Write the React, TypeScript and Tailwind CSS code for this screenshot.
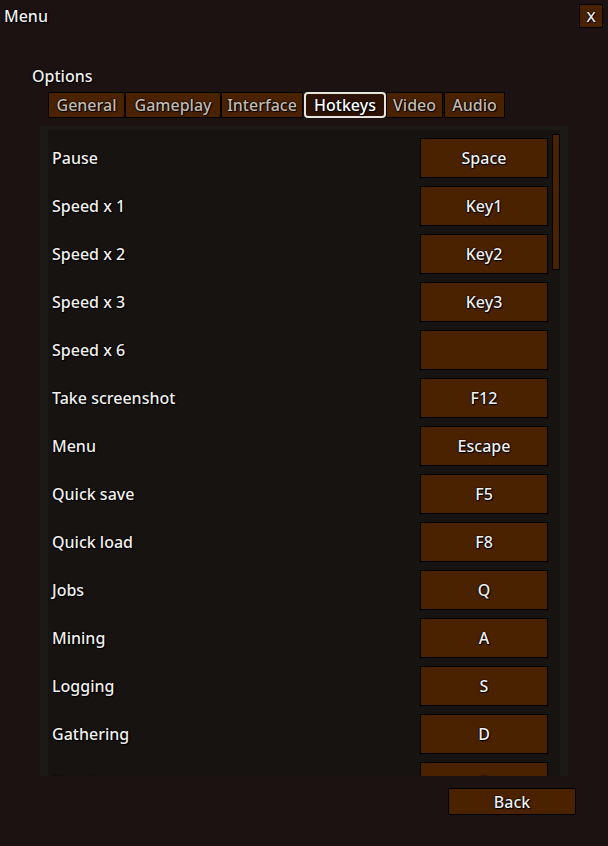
import React from "react";

const rows: [string, string][] = [
  ["Pause", "Space"],
  ["Speed x 1", "Key1"],
  ["Speed x 2", "Key2"],
  ["Speed x 3", "Key3"],
  ["Speed x 6", ""],
  ["Take screenshot", "F12"],
  ["Menu", "Escape"],
  ["Quick save", "F5"],
  ["Quick load", "F8"],
  ["Jobs", "Q"],
  ["Mining", "A"],
  ["Logging", "S"],
  ["Gathering", "D"],
  ["Hunting", "F"],
];

const tabs: { t: string; cls: string }[] = [
  { t: "General", cls: "w-[77px]" },
  { t: "Gameplay", cls: "w-[96px]" },
  { t: "Interface", cls: "w-[82px]" },
  { t: "Hotkeys", cls: "w-[82px] ml-[1px]" },
  { t: "Video", cls: "w-[57px]" },
  { t: "Audio", cls: "w-[61px] ml-[1px]" },
];

const shadow = "[text-shadow:0_0_2px_#000,0_0_1px_#000,1px_1px_1px_#000]";

export default function App() {
  return (
    <div
      className="w-[608px] h-[846px] bg-[#1c1212] flex flex-col text-[16px] font-medium text-[#f2f0ee] overflow-hidden"
      style={{ fontFamily: '"Noto Sans", "Open Sans", sans-serif' }}
    >
      <div className="h-8 flex items-center justify-between pl-1 pr-[5px]">
        <span className={`leading-6 ${shadow}`}>Menu</span>
        <div className={`w-6 h-6 bg-[#4a2200] border border-black flex items-center justify-center text-[15px] leading-none ${shadow}`}>
          X
        </div>
      </div>
      <div className="pl-8 mt-8">
        <div className={`leading-6 ${shadow}`}>Options</div>
      </div>
      <div className="flex ml-12 mt-1 h-[26px]">
        {tabs.map(({ t, cls }) =>
          t === "Hotkeys" ? (
            <div
              key={t}
              className={`${cls} h-[26px] flex items-center justify-center bg-[#2c1105] border-2 border-[#e8e4e0] rounded-[4px] text-white ${shadow}`}
            >
              {t}
            </div>
          ) : (
            <div
              key={t}
              className={`${cls} h-[26px] flex items-center justify-center bg-[#4a2200] border border-black text-[#c4bab0] ${shadow}`}
            >
              {t}
            </div>
          )
        )}
      </div>
      <div className="ml-10 mt-2 w-[528px] h-[650px] bg-[#1c1a17] px-2 pt-1 flex flex-col">
        <div className="flex-1 bg-[#161310] flex overflow-hidden">
          <div className="flex-1 pl-1 pt-2 flex flex-col gap-2">
            {rows.map(([label, key]) => (
              <div key={label} className="flex items-center justify-between h-10 shrink-0">
                <span className={shadow}>{label}</span>
                <div className={`w-32 h-10 bg-[#4a2200] border border-black flex items-center justify-center ${shadow}`}>
                  {key}
                </div>
              </div>
            ))}
          </div>
          <div className="w-3 pl-1 pt-1">
            <div className="w-2 h-[136px] bg-[#4a2200] border border-black" />
          </div>
        </div>
      </div>
      <div className="flex justify-end pr-8 mt-3">
        <div className={`w-32 h-[27px] bg-[#4a2200] border border-black flex items-center justify-center ${shadow}`}>
          Back
        </div>
      </div>
    </div>
  );
}
